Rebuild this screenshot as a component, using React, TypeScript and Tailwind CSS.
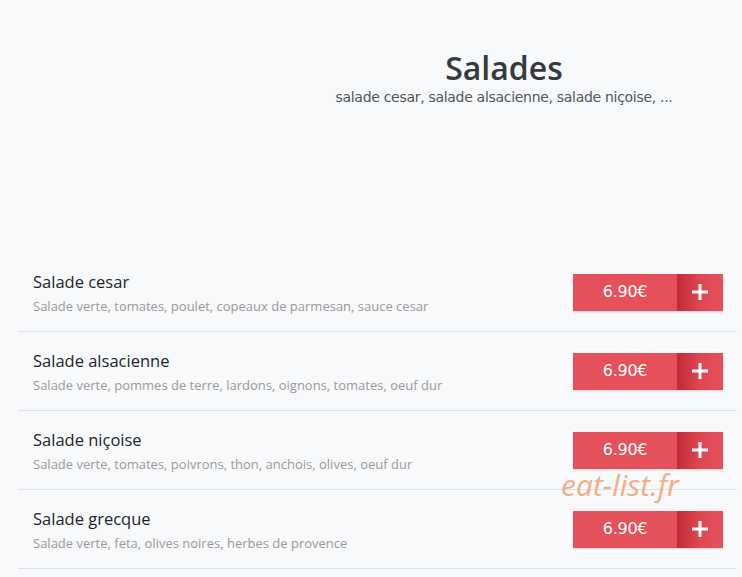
const items = [
  {
    name: "Salade cesar",
    desc: "Salade verte, tomates, poulet, copeaux de parmesan, sauce cesar",
  },
  {
    name: "Salade alsacienne",
    desc: "Salade verte, pommes de terre, lardons, oignons, tomates, oeuf dur",
  },
  {
    name: "Salade niçoise",
    desc: "Salade verte, tomates, poivrons, thon, anchois, olives, oeuf dur",
  },
  {
    name: "Salade grecque",
    desc: "Salade verte, feta, olives noires, herbes de provence",
  },
];

export default function App() {
  return (
    <div className="relative min-h-[577px] w-[742px] overflow-hidden bg-[#f8f9fa] font-['Open_Sans',sans-serif]">
      <header className="flex flex-col items-center pt-[48px] pl-[266px]">
        <h1 className="font-['Open_Sans',sans-serif] text-[32px] font-semibold leading-[39px] text-[#343a40]">
          Salades
        </h1>
        <p className="font-['DejaVu_Sans',sans-serif] text-[14px] leading-[20px] tracking-[-0.3px] text-[#4f565c]">
          salade cesar, salade alsacienne, salade niçoise, ...
        </p>
      </header>

      <ul className="mt-[146px] ml-[18px] mr-[5px]">
        {items.map((item) => (
          <li
            key={item.name}
            className="flex h-[79px] items-center justify-between border-b border-[#dee2e6] pl-[15px] pr-[14px]"
          >
            <div className="flex flex-col pt-[2px]">
              <span className="text-[16.5px] leading-[22px] text-[#212529]">
                {item.name}
              </span>
              <span className="mt-[4px] text-[13px] leading-[18px] text-[#9a9a9a]">
                {item.desc}
              </span>
            </div>
            <div className="flex h-[37px] w-[150px] shadow-[0_1px_2px_rgba(0,0,0,0.15)]">
              <span className="flex w-[104px] items-center justify-center bg-[#e4515b] font-['DejaVu_Sans',sans-serif] text-[16px] tracking-[-0.3px] text-white">
                6.90€
              </span>
              <span className="flex flex-1 items-center justify-center bg-gradient-to-r from-[#c12a35] via-[#df4751] to-[#e4515b] text-white">
                <svg width="18" height="18" viewBox="0 0 18 18">
                  <path d="M9 1v16M1 9h16" stroke="white" strokeWidth="3" />
                </svg>
              </span>
            </div>
          </li>
        ))}
      </ul>

      <span className="absolute left-[561px] top-[462px] text-[30px] italic text-[#f2a77b] opacity-90">
        eat-list.fr
      </span>
    </div>
  );
}
